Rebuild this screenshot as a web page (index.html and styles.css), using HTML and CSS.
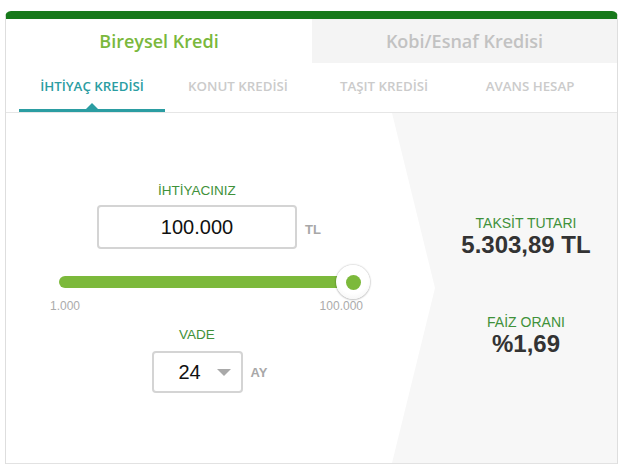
FILE: index.html
```html
<!DOCTYPE html>
<html lang="tr">
<head>
<meta charset="utf-8">
<title>Kredi Hesaplama</title>
<link rel="stylesheet" href="styles.css">
</head>
<body>
<div class="page">
  <div class="card">
    <div class="tabs">
      <div class="tab active">Bireysel Kredi</div>
      <div class="tab">Kobi/Esnaf Kredisi</div>
    </div>
    <div class="subtabs">
      <div class="subtab active">İHTİYAÇ KREDİSİ</div>
      <div class="subtab">KONUT KREDİSİ</div>
      <div class="subtab">TAŞIT KREDİSİ</div>
      <div class="subtab">AVANS HESAP</div>
    </div>
    <div class="body">
      <div class="form">
        <div class="label first">İHTİYACINIZ</div>
        <div class="field">
          <div class="input">100.000</div>
          <div class="unit">TL</div>
        </div>
        <div class="slider">
          <div class="track"></div>
          <div class="thumb"><span class="dot"></span></div>
        </div>
        <div class="range">
          <span>1.000</span>
          <span>100.000</span>
        </div>
        <div class="label">VADE</div>
        <div class="field select-field">
          <div class="select"><span class="val">24</span><span class="caret"></span></div>
          <div class="unit">AY</div>
        </div>
      </div>
      <div class="result">
        <div class="res-block">
          <div class="res-label">TAKSİT TUTARI</div>
          <div class="res-value">5.303,89 TL</div>
        </div>
        <div class="res-block second">
          <div class="res-label">FAİZ ORANI</div>
          <div class="res-value">%1,69</div>
        </div>
      </div>
    </div>
  </div>
</div>
</body>
</html>
```

FILE: styles.css
```css
* { box-sizing: border-box; }
html, body { margin: 0; padding: 0; background: #fff; }
body { font-family: "Liberation Sans", Arial, sans-serif; }

.page { padding: 11px 8px 0 5px; }

.card {
  width: 613px;
  border-top: 8px solid #17791b;
  border-left: 1px solid #dedede;
  border-right: 1px solid #dedede;
  border-radius: 6px 6px 0 0;
  background: #fff;
}

.tabs { display: flex; height: 44px; }
.tab {
  flex: 0 0 306px;
  display: flex;
  align-items: center;
  justify-content: center;
  font-family: "Open Sans", sans-serif;
  font-weight: 600;
  font-size: 18px;
  color: #c2c2c2;
  background: #f4f4f4;
}
.tab + .tab { flex: 1 1 auto; }
.tab.active { background: #fff; color: #7ab83c; }

.subtabs {
  display: flex;
  height: 50px;
  padding: 0 14px 0 13px;
  border-bottom: 1px solid #e6e6e6;
}
.subtab {
  flex: 0 0 146px;
  position: relative;
  display: flex;
  align-items: center;
  justify-content: center;
  padding-bottom: 4px;
  font-family: "Open Sans", sans-serif;
  font-weight: 600;
  font-size: 13.3px;
  color: #cbcbcb;
}
.subtab.active { color: #2b9da2; border-bottom: 3px solid #2b9da2; padding-bottom: 1px; }
.subtab.active::after {
  content: "";
  position: absolute;
  left: 50%;
  bottom: 0;
  margin-left: -6px;
  border-left: 6px solid transparent;
  border-right: 6px solid transparent;
  border-bottom: 6px solid #2b9da2;
}

.body {
  display: flex;
  height: 351px;
  border-bottom: 1px solid #e2e2e2;
}

.form {
  flex: 0 0 386px;
  padding: 70px 0 0 44px;
  display: flex;
  flex-direction: column;
}
.label {
  width: 294px;
  text-align: center;
  font-size: 13.5px;
  line-height: 16px;
  color: #3f913a;
  margin-top: 14px;
}
.label.first { margin-top: 0; }

.field {
  width: 294px;
  display: grid;
  grid-template-columns: 1fr 200px 1fr;
  align-items: center;
  margin-top: 6px;
}
.input {
  grid-column: 2;
  height: 44px;
  border: 2px solid #d4d4d4;
  border-radius: 4px;
  display: flex;
  align-items: center;
  justify-content: center;
  font-size: 20px;
  color: #111;
}
.unit {
  grid-column: 3;
  padding-left: 8px;
  font-size: 13px;
  font-weight: bold;
  color: #a8a8a8;
  padding-top: 4px;
}

.slider {
  width: 320px;
  height: 34px;
  margin-top: 16px;
  position: relative;
  display: flex;
  align-items: center;
  padding-left: 9px;
}
.track {
  width: 300px;
  height: 12px;
  border-radius: 6px;
  background: #7cb93b;
}
.thumb {
  position: absolute;
  left: 286px;
  top: 0;
  width: 34px;
  height: 34px;
  border-radius: 50%;
  background: radial-gradient(circle at 50% 40%, #ffffff 55%, #f0f0f0 100%);
  box-shadow: 0 0 2px rgba(0,0,0,0.35), 0 1px 2px rgba(0,0,0,0.15);
  display: flex;
  align-items: center;
  justify-content: center;
}
.dot {
  width: 15px;
  height: 15px;
  border-radius: 50%;
  background: #7cb93b;
}

.range {
  width: 313px;
  display: flex;
  justify-content: space-between;
  font-size: 12px;
  line-height: 14px;
  color: #ababab;
  margin-top: 0;
}

.select-field { grid-template-columns: 1fr 91px 1fr; margin-top: 8px; }
.select {
  grid-column: 2;
  height: 42px;
  border: 2px solid #d4d4d4;
  border-radius: 4px;
  display: flex;
  align-items: center;
  padding-left: 25px;
}
.val { font-size: 20px; color: #111; }
.caret {
  margin-left: 16px;
  width: 0;
  height: 0;
  border-left: 7.5px solid transparent;
  border-right: 7.5px solid transparent;
  border-top: 7px solid #a9a9a9;
}
.select-field .unit { padding-top: 0; }

.result {
  flex: 1 1 auto;
  background: #f7f7f7;
  clip-path: polygon(0 0, 100% 0, 100% 100%, 0 100%, 43px 50%);
  padding: 102px 0 0 43px;
  display: flex;
  flex-direction: column;
  align-items: center;
}
.res-block { text-align: center; }
.res-block.second { margin-top: 55px; }
.res-label {
  font-size: 14px;
  line-height: 16px;
  color: #3f913a;
}
.res-value {
  font-size: 24px;
  font-weight: bold;
  line-height: 28px;
  color: #333;
}
```
